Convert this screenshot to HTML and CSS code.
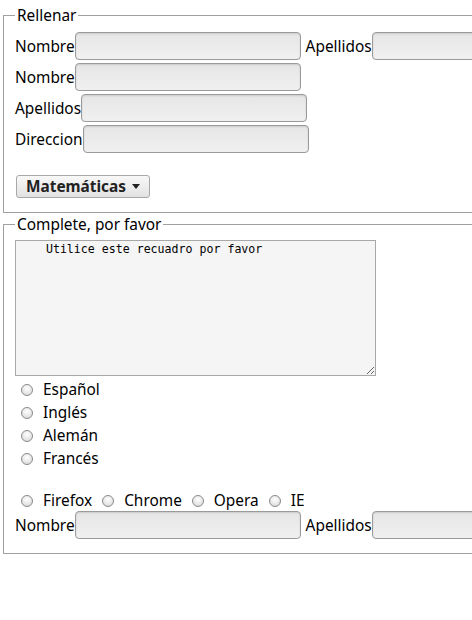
FILE: index.html
```html
<!DOCTYPE html>
<html lang="es">
<head>
<meta charset="utf-8">
<title>Formulario</title>
<link rel="stylesheet" href="styles.css">
</head>
<body>
<div class="page">
  <fieldset class="fs">
    <legend class="lg">Rellenar</legend>
    <div class="row"><label class="lbl">Nombre</label><input class="inp" type="text"><label class="lbl lbl-next">Apellidos</label><input class="inp" type="text"></div>
    <div class="row"><label class="lbl">Nombre</label><input class="inp" type="text"></div>
    <div class="row"><label class="lbl">Apellidos</label><input class="inp" type="text"></div>
    <div class="row"><label class="lbl">Direccion</label><input class="inp" type="text"></div>
    <div class="btn-row">
      <button class="btn" type="button">Matemáticas <span class="caret"></span></button>
    </div>
  </fieldset>
  <fieldset class="fs fs2">
    <legend class="lg">Complete, por favor</legend>
    <textarea class="ta">    Utilice este recuadro por favor</textarea>
    <div class="radios">
      <label class="opt"><span class="radio"></span>Español</label>
      <label class="opt"><span class="radio"></span>Inglés</label>
      <label class="opt"><span class="radio"></span>Alemán</label>
      <label class="opt"><span class="radio"></span>Francés</label>
    </div>
    <div class="browsers">
      <label class="opt-inline"><span class="radio"></span>Firefox</label>
      <label class="opt-inline"><span class="radio"></span>Chrome</label>
      <label class="opt-inline"><span class="radio"></span>Opera</label>
      <label class="opt-inline"><span class="radio"></span>IE</label>
    </div>
    <div class="row"><label class="lbl">Nombre</label><input class="inp" type="text"><label class="lbl lbl-next">Apellidos</label><input class="inp" type="text"></div>
  </fieldset>
</div>
</body>
</html>
```
FILE: styles.css
```css
html, body {
  margin: 0;
  padding: 0;
  background: #fff;
}
body {
  font-family: "Noto Sans", "Open Sans", "DejaVu Sans", sans-serif;
  font-size: 15.4px;
  color: #000;
  overflow: hidden;
}
.page {
  width: 472px;
  overflow: hidden;
  padding-top: 4px;
}
.fs {
  width: 600px;
  margin: 0 0 0 3px;
  padding: 6px 11px 14px 11px;
  border: 1px solid #a0a0a0;
  box-sizing: border-box;
}
.lg {
  padding: 2px 2px 0 2px;
  font-size: 15.4px;
  line-height: 20px;
}
.row {
  display: flex;
  align-items: center;
  height: 28px;
  margin-bottom: 3px;
}
.lbl {
  line-height: 22px;
  padding-top: 2px;
  white-space: nowrap;
}
.lbl-next {
  margin-left: 5px;
}
.inp {
  box-sizing: border-box;
  width: 226px;
  height: 28px;
  margin: 0;
  padding: 0 4px;
  border: 1px solid #9a9a9a;
  border-radius: 4px;
  background: linear-gradient(#e6e6e6, #f0f0f0);
  box-shadow: inset 0 1px 2px rgba(0,0,0,0.12);
  font: inherit;
}
.btn-row {
  padding-top: 19px;
}
.btn {
  display: inline-flex;
  align-items: center;
  box-sizing: border-box;
  height: 23px;
  width: 134px;
  margin: 0 0 0 1px;
  padding: 0 6px 0 9px;
  border: 1px solid #a8a8a8;
  border-radius: 3px;
  background: linear-gradient(#f8f8f8, #e2e2e2);
  font-family: "Noto Sans", "Open Sans", "DejaVu Sans", sans-serif;
  font-size: 15.4px;
  font-weight: bold;
  color: #222;
  white-space: nowrap;
}
.caret {
  display: inline-block;
  width: 0;
  height: 0;
  margin-left: 6px;
  border-left: 4px solid transparent;
  border-right: 4px solid transparent;
  border-top: 5px solid #222;
}
.fs2 {
  padding-top: 5px;
  padding-bottom: 11px;
}
.ta {
  display: block;
  box-sizing: border-box;
  width: 361px;
  height: 136px;
  margin: 0;
  padding: 1px 2px;
  border: 1px solid #a8a8a8;
  background: #f5f5f5;
  font-family: "DejaVu Sans Mono", monospace;
  font-size: 11.6px;
  line-height: 15px;
  color: #000;
  resize: both;
}
.radios {
  padding-top: 1px;
}
.opt {
  display: flex;
  align-items: center;
  box-sizing: border-box;
  height: 23px;
  padding-top: 2px;
}
.radio {
  display: inline-block;
  box-sizing: border-box;
  width: 12px;
  height: 12px;
  margin: 0 10px 0 6px;
  border: 1px solid #8a8a8a;
  border-radius: 50%;
  background: radial-gradient(circle at 50% 35%, #ffffff, #d4d4d4);
}
.browsers {
  display: flex;
  align-items: center;
  box-sizing: border-box;
  height: 23px;
  padding-top: 2px;
  margin-top: 19px;
}
.opt-inline {
  display: flex;
  align-items: center;
  margin-right: 4px;
}
```
